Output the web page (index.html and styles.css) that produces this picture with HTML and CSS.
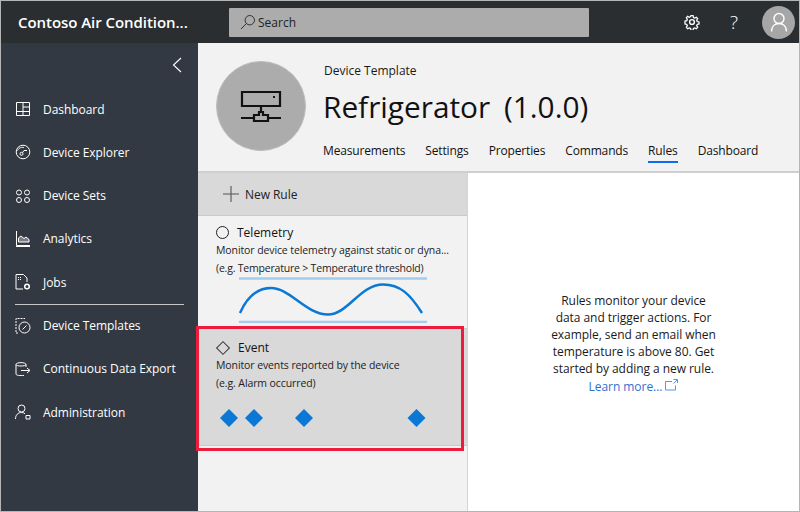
FILE: index.html
```html
<!DOCTYPE html>
<html lang="en">
<head>
  <meta charset="UTF-8" />
  <title>Device Template - Refrigerator</title>
  <link rel="stylesheet" href="styles.css">
</head>
<body>
  <div class="window">
    <header class="topbar">
      <div class="app-name">Contoso Air Condition...</div>
      <div class="search">
        <svg width="16" height="16" viewBox="0 0 16 16" fill="none" stroke="#333" stroke-width="1"><circle cx="9.800" cy="6.200" r="4.700"/><path d="M6.400 9.600 1 15"/></svg>
        <span>Search</span>
      </div>
      <div class="top-icons">
        <svg class="gear" width="16" height="16" viewBox="0 0 16 16" fill="none" stroke="#fff" stroke-width="1.400"><circle cx="8" cy="8" r="2.400"/><path d="M6.800 1h2.400l.4 2 1.500.7 1.800-1 1.400 1.600-1.100 1.700.6 1.500 2 .5v2.200l-2 .5-.6 1.500 1.100 1.700-1.400 1.600-1.800-1-1.500.7-.4 2H6.800l-.4-2-1.500-.7-1.800 1-1.400-1.600 1.100-1.700-.6-1.500-2-.5V7l2-.5.6-1.500-1.100-1.700 1.400-1.600 1.800 1 1.500-.7z" transform="translate(.8 .8) scale(.9)"/></svg>
        <span class="help">?</span>
        <div class="avatar">
          <svg width="18" height="20" viewBox="0 0 18 20" fill="none" stroke="#fff" stroke-width="1.400"><circle cx="9" cy="6.500" r="5"/><path d="M1.500 19.500c0-5 3-8 7.500-8s7.500 3 7.500 8"/></svg>
        </div>
      </div>
    </header>

    <div class="body">
      <nav class="sidebar">
        <div class="collapse">
          <svg width="10" height="16" viewBox="0 0 10 16" fill="none" stroke="#fff" stroke-width="1.100"><path d="M9 1 1.500 8 9 15"/></svg>
        </div>
        <a class="nav-item">
          <svg width="16" height="16" viewBox="0 0 16 16" fill="none" stroke="#fff"><path d="M1.500 1.500h13v13h-13zM1.500 10.500h13M8 1.500v13M8 6h6.500"/></svg>
          Dashboard
        </a>
        <a class="nav-item">
          <svg width="16" height="16" viewBox="0 0 16 16" fill="none" stroke="#fff"><circle cx="8" cy="8" r="6.800"/><circle cx="6.500" cy="9.800" r="1.500"/><path d="M7.500 8.700 9 6.500h3M2.500 6.500C4 3.500 7 3 9 3.500"/></svg>
          Device Explorer
        </a>
        <a class="nav-item">
          <svg width="16" height="16" viewBox="0 0 16 16" fill="none" stroke="#fff"><circle cx="4" cy="4.500" r="2.500"/><circle cx="12" cy="4.500" r="2.500"/><circle cx="4" cy="12" r="2.500"/><circle cx="12" cy="12" r="2.500"/></svg>
          Device Sets
        </a>
        <a class="nav-item">
          <svg width="16" height="16" viewBox="0 0 16 16" fill="none" stroke="#fff"><path d="M1.500 0v14.500H15M1 15.500h14"/><path d="M3.500 11V7l2.500-2 3 2.500 2-1.500 3 2.500V11z" fill="#fff" fill-opacity=".35"/></svg>
          Analytics
        </a>
        <a class="nav-item">
          <svg width="16" height="16" viewBox="0 0 16 16" fill="none" stroke="#fff"><path d="M8 15H1V.5h7.500L12 4v4"/><path d="M3 3.500h4M3 5.500h4" stroke-dasharray="1 1"/><circle cx="12" cy="12.500" r="2.300" stroke-width="1.500"/></svg>
          Jobs
        </a>
        <div class="nav-rule"></div>
        <a class="nav-item">
          <svg width="16" height="16" viewBox="0 0 16 16" fill="none" stroke="#fff"><path d="M3 15H1V.5h9" stroke-dasharray="2 1"/><circle cx="9.500" cy="9.500" r="5.500"/><path d="M7.500 11.500 11.500 7.500"/></svg>
          Device Templates
        </a>
        <a class="nav-item">
          <svg width="16" height="16" viewBox="0 0 16 16" fill="none" stroke="#fff"><path d="M1 3.500C1 1 11 1 11 3.500M1 3.500c0 2 10 2 10 0V6M1 3.500V13c0 1.500 4 1.800 8 1.400M6 9.500h8.500M12 7l3 2.500-3 2.500"/></svg>
          Continuous Data Export
        </a>
        <a class="nav-item">
          <svg width="16" height="16" viewBox="0 0 16 16" fill="none" stroke="#fff"><circle cx="6.500" cy="4.500" r="3.500"/><path d="M.5 15c0-4 2.500-6.500 6-6.500 1.500 0 2.500.4 3.500 1.200"/><path d="M11 11.500h4v3.500h-4z"/></svg>
          Administration
        </a>
      </nav>

      <main class="content">
        <section class="template-head">
          <div class="device-circle">
            <svg width="42" height="34" viewBox="0 0 42 34" fill="none" stroke="#111" stroke-width="2.200"><path d="M2 3h38v14H2zM21 17v6M1 29h13M28 29h13M14 32v-6h5v-3h4v3h5v6z"/><path d="M33 8h2" stroke-width="2"/></svg>
          </div>
          <div class="template-info">
            <div class="template-label">Device Template</div>
            <h1 class="template-name">Refrigerator <span class="version">(1.0.0)</span></h1>
            <div class="tabs">
              <span class="tab">Measurements</span>
              <span class="tab">Settings</span>
              <span class="tab">Properties</span>
              <span class="tab">Commands</span>
              <span class="tab active">Rules</span>
              <span class="tab">Dashboard</span>
            </div>
          </div>
        </section>

        <section class="rules">
          <div class="rule-list">
            <div class="new-rule">
              <svg width="16" height="16" viewBox="0 0 16 16" stroke="#555" stroke-width="1.100"><path d="M8 0v16M0 8h16"/></svg>
              New Rule
            </div>
            <div class="rule-card telemetry">
              <div class="rule-title">
                <span class="circle-mark"></span>
                Telemetry
              </div>
              <div class="rule-text">Monitor device telemetry against static or dyna...</div>
              <div class="rule-text narrow">(e.g. Temperature &gt; Temperature threshold)</div>
              <svg class="wave" width="190" height="46" viewBox="0 0 190 46" fill="none">
                <path d="M1 1.500h188M1 45h188" stroke="#a6cbeb" stroke-width="2.500"/>
                <path d="M2 36C10 18 20 11 33 11c19 0 35 26.500 57 26.500 20 0 32-30 55-30 17 0 27 9.500 39 28.500" stroke="#0a78d4" stroke-width="2.500"/>
              </svg>
            </div>
            <div class="rule-card event">
              <div class="rule-title">
                <span class="diamond-mark"></span>
                Event
              </div>
              <div class="rule-text">Monitor events reported by the device</div>
              <div class="rule-text">(e.g. Alarm occurred)</div>
              <svg class="marks" width="210" height="20" viewBox="0 0 210 20" fill="#0a78d4">
                <path d="M10 1l9 9-9 9-9-9z"/>
                <path d="M35 1l9 9-9 9-9-9z"/>
                <path d="M85 1l9 9-9 9-9-9z"/>
                <path d="M197.500 1l9 9-9 9-9-9z"/>
              </svg>
            </div>
          </div>
          <div class="rule-help">
            <p>Rules monitor your device data and trigger actions. For example, send an email when temperature is above 80. Get started by adding a new rule.<br>
              <a class="learn-more">Learn more...
                <svg width="13" height="12" viewBox="0 0 13 12" fill="none" stroke="#5b93dc"><path d="M7 2.500H.5v8.500h10V6.500M8.500.5h4v3.500M12 1 8.500 4.500"/></svg>
              </a>
            </p>
          </div>
        </section>
      </main>
    </div>

    <div class="highlight"></div>
  </div>
</body>
</html>
```

FILE: styles.css
```css
html, body {
  margin: 0;
  height: 100%;
  overflow: hidden;
}
body {
  font-family: 'Open Sans', 'Noto Sans', sans-serif;
  font-size: 12px;
  color: #1a1a1a;
  background: #fff;
}
.window {
  position: relative;
  width: 800px;
  height: 512px;
  box-sizing: border-box;
  border: 1px solid #b5b5b5;
  display: flex;
  flex-direction: column;
  overflow: hidden;
}
.topbar {
  height: 42px;
  flex: none;
  background: #2b2e31;
  display: flex;
  align-items: center;
}
.app-name {
  width: 228px;
  box-sizing: border-box;
  padding-left: 17px;
  color: #fff;
  font-size: 15px;
  font-weight: 600;
  letter-spacing: -0.05px;
  white-space: nowrap;
}
.search {
  width: 360px;
  height: 29px;
  background: #acacac;
  border-radius: 1px;
  display: flex;
  align-items: center;
  gap: 2px;
  padding-left: 11px;
  box-sizing: border-box;
  font-size: 12px;
  color: #222;
}
.top-icons {
  margin-left: auto;
  display: flex;
  align-items: center;
}
.gear {
  margin-right: 28px;
}
.help {
  color: #fff;
  font-size: 19px;
  font-weight: 300;
  width: 12px;
  margin-right: 22px;
  text-align: center;
}
.avatar {
  width: 33px;
  height: 33px;
  border-radius: 50%;
  background: #a6a6a6;
  display: flex;
  align-items: center;
  justify-content: center;
  margin-right: 4px;
}
.body {
  flex: 1;
  display: flex;
  min-height: 0;
}
.sidebar {
  width: 197px;
  flex: none;
  background: #333942;
  color: #fff;
}
.collapse {
  height: 44.400px;
  display: flex;
  justify-content: flex-end;
  align-items: center;
  padding: 0 16px 0 0;
}
.nav-item {
  display: flex;
  align-items: center;
  height: 43.300px;
  padding-left: 14px;
  gap: 12px;
  font-size: 12px;
  letter-spacing: -0.05px;
  color: #fff;
  white-space: nowrap;
}
.nav-item svg {
  flex: none;
}
.nav-rule {
  height: 1px;
  margin: 0 14px -1px;
  background: #c8c8c8;
}
.content {
  flex: 1;
  display: flex;
  flex-direction: column;
  min-width: 0;
}
.template-head {
  height: 130px;
  flex: none;
  box-sizing: border-box;
  background: #f2f2f2;
  border-bottom: 2px solid #cfcfcf;
  display: flex;
  padding: 18px 0 0 18px;
}
.device-circle {
  width: 90px;
  height: 90px;
  border-radius: 50%;
  background: #acacac;
  border: 1px solid #bdbdbd;
  box-sizing: border-box;
  display: flex;
  align-items: center;
  justify-content: center;
  flex: none;
}
.template-info {
  margin-left: 18px;
}
.template-label {
  font-size: 12px;
  margin-top: 2px;
  line-height: 16px;
  color: #1a1a1a;
}
.template-name {
  margin: 8px 0 0 -1px;
  font-size: 29.800px;
  line-height: 40px;
  font-weight: 400;
  color: #111;
  white-space: nowrap;
}
.version {
  margin-left: 6px;
}
.tabs {
  display: flex;
  gap: 20px;
  margin-top: 15px;
  margin-left: -1px;
}
.tab {
  font-size: 12px;
  letter-spacing: -0.15px;
  line-height: 17px;
  padding-bottom: 2px;
  border-bottom: 2px solid transparent;
  color: #111;
  white-space: nowrap;
}
.tab.active {
  border-bottom-color: #0f6cf0;
}
.rules {
  flex: 1;
  display: flex;
  min-height: 0;
}
.rule-list {
  width: 269px;
  flex: none;
  background: #f2f2f2;
  border-right: 1px solid #d5d5d5;
}
.new-rule {
  height: 42px;
  background: #d9d9d9;
  border-bottom: 1px solid #c9c9c9;
  display: flex;
  align-items: center;
  gap: 6px;
  padding-left: 25px;
  font-size: 12px;
  letter-spacing: -0.05px;
  color: #222;
}
.rule-card {
  box-sizing: border-box;
  padding: 8px 18px 0;
}
.telemetry {
  height: 112px;
}
.event {
  height: 118px;
  background: #d9d9d9;
  border-top: 1px solid #c9c9c9;
  border-bottom: 1px solid #c9c9c9;
  padding-top: 10px;
}
.rule-title {
  display: flex;
  align-items: center;
  gap: 8px;
  font-size: 12px;
  line-height: 17px;
  color: #111;
}
.circle-mark {
  width: 11px;
  height: 11px;
  border: 1.500px solid #222;
  border-radius: 50%;
}
.diamond-mark {
  width: 8px;
  height: 8px;
  border: 1px solid #333;
  transform: rotate(45deg);
  margin: 0 2px 0 2px;
}
.rule-text {
  font-size: 10.500px;
  letter-spacing: -0.1px;
  line-height: 18px;
  color: #222;
  white-space: nowrap;
}
.rule-text.narrow {
  letter-spacing: -0.2px;
}
.wave {
  display: block;
  margin: 0 0 0 22px;
}
.marks {
  display: block;
  margin: 16px 0 0 2.500px;
}
.rule-help {
  flex: 1;
  background: #fff;
  display: flex;
  justify-content: center;
  padding-top: 119px;
}
.rule-help p {
  margin: 0;
  width: 172px;
  font-size: 12px;
  letter-spacing: -0.05px;
  line-height: 17px;
  text-align: center;
  color: #1a1a1a;
}
.learn-more {
  display: inline-block;
  margin-top: 1px;
  color: #2f6fd0;
}
.highlight {
  position: absolute;
  left: 195px;
  top: 325px;
  width: 268px;
  height: 125px;
  box-sizing: border-box;
  border: 3px solid #ed1c3c;
}
```
